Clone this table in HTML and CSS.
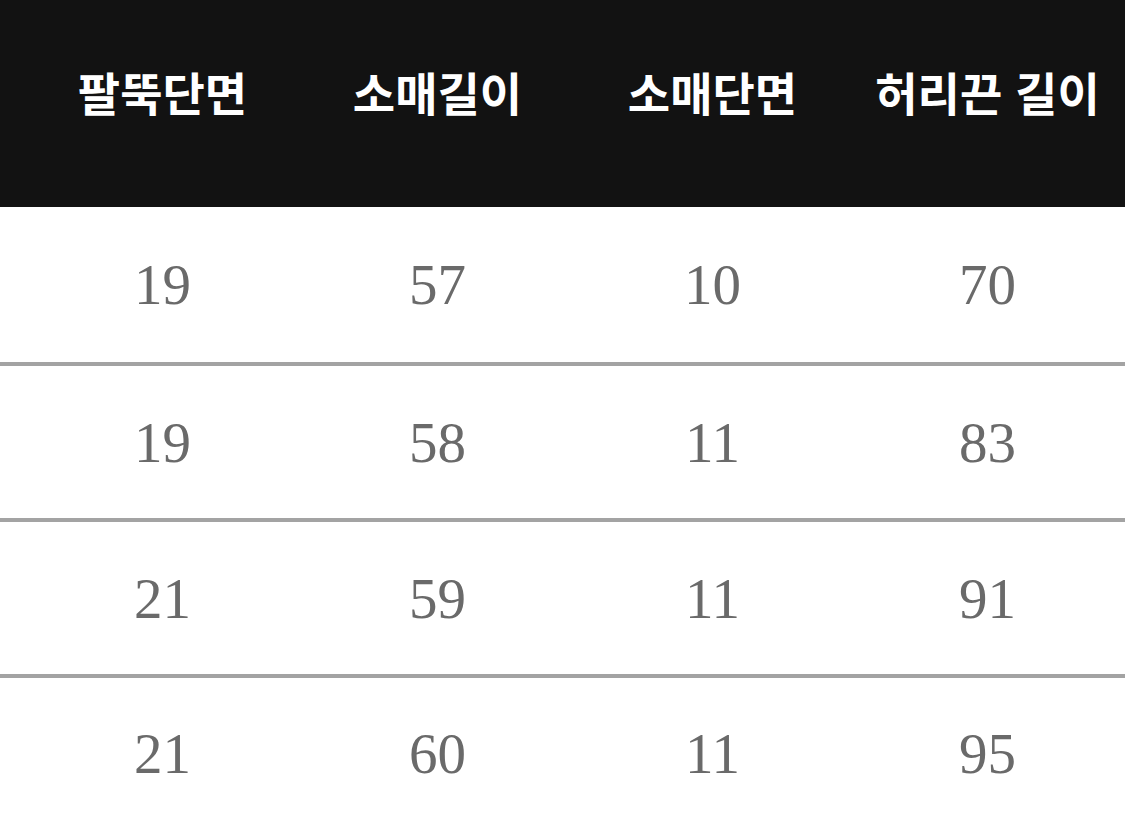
FILE: index.html
```html
<!DOCTYPE html>
<html lang="ko">
<head>
<meta charset="utf-8">
<link rel="stylesheet" href="styles.css">
</head>
<body>
<div class="table">
  <div class="row head">
    <div class="cell">팔뚝단면</div>
    <div class="cell">소매길이</div>
    <div class="cell">소매단면</div>
    <div class="cell">허리끈 길이</div>
  </div>
  <div class="row first">
    <div class="cell">19</div>
    <div class="cell">57</div>
    <div class="cell">10</div>
    <div class="cell">70</div>
  </div>
  <div class="row">
    <div class="cell">19</div>
    <div class="cell">58</div>
    <div class="cell">11</div>
    <div class="cell">83</div>
  </div>
  <div class="row">
    <div class="cell">21</div>
    <div class="cell">59</div>
    <div class="cell">11</div>
    <div class="cell">91</div>
  </div>
  <div class="row last">
    <div class="cell">21</div>
    <div class="cell">60</div>
    <div class="cell">11</div>
    <div class="cell">95</div>
  </div>
</div>
</body>
</html>
```

FILE: styles.css
```css
html, body {
  margin: 0;
  padding: 0;
  background: #ffffff;
}
.table {
  width: 1125px;
  overflow: hidden;
}
.row {
  display: grid;
  grid-template-columns: repeat(4, 275px);
  padding-left: 25px;
  height: 152px;
  align-items: center;
  border-bottom: 4px solid #a3a3a3;
  font-family: "Liberation Serif", "Times New Roman", serif;
  font-size: 57px;
  color: #6a6a6a;
}
.row .cell {
  text-align: center;
  line-height: 1;
}
.row.first {
  height: 155px;
}
.row.last {
  border-bottom: none;
  height: 151px;
}
.row.head {
  height: 207px;
  border-bottom: none;
  background: #121212;
  color: #ffffff;
  font-family: "Noto Sans CJK KR", "Noto Sans", sans-serif;
  font-weight: 700;
  font-size: 46px;
  align-items: start;
  padding-top: 65px;
  box-sizing: border-box;
}
.row.head .cell {
  line-height: 52px;
  white-space: nowrap;
}
```
